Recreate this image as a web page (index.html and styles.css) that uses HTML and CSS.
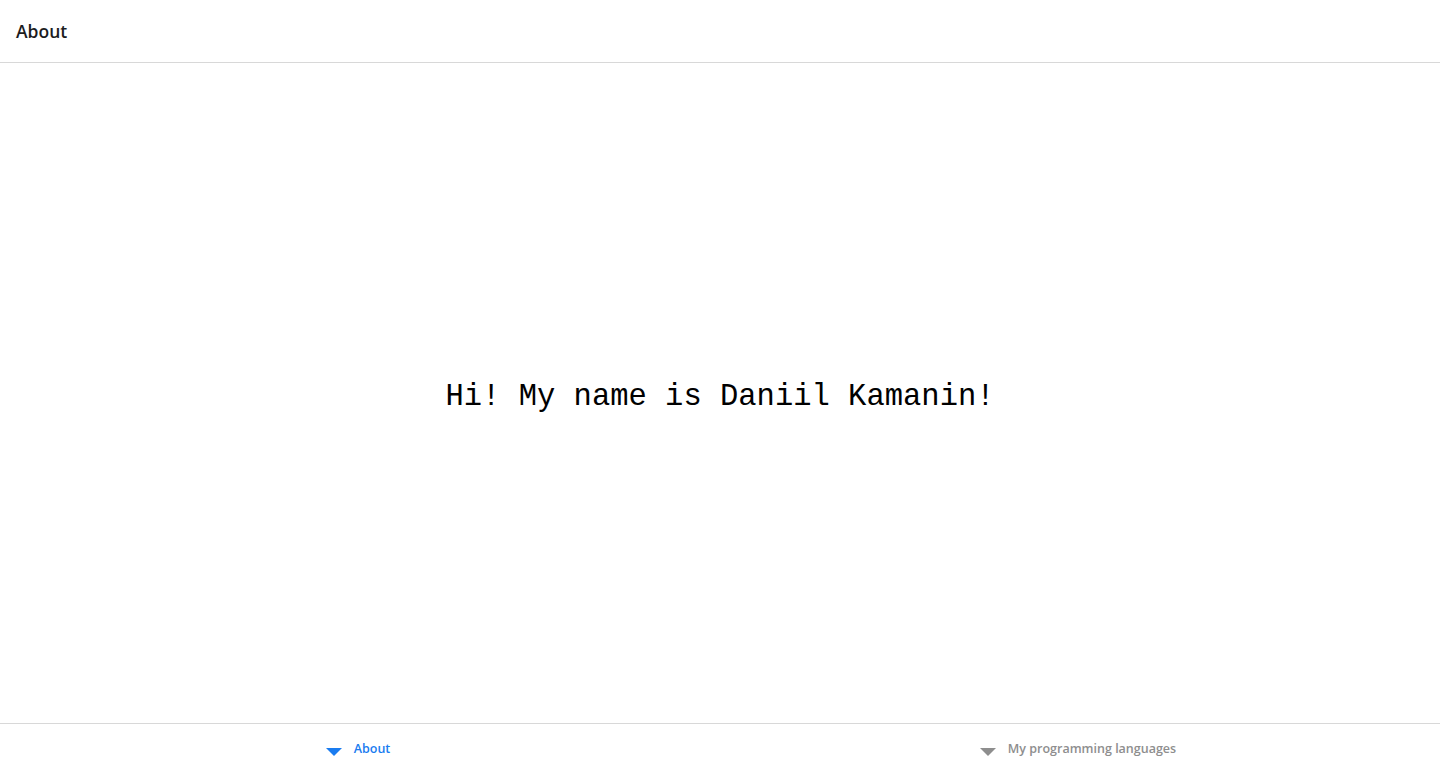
FILE: index.html
```html
<!DOCTYPE html>
<html lang="en">
<head>
<meta charset="utf-8">
<title>About</title>
<link rel="stylesheet" href="styles.css">
</head>
<body>
<div class="app">
  <header class="topbar"><h1 class="title">About</h1></header>
  <main class="content">
    <p class="greeting">Hi! My name is Daniil Kamanin!</p>
  </main>
  <nav class="tabbar">
    <a class="tab active" href="#">
      <svg class="tab-icon" width="16" height="10" viewBox="0 0 16 10"><path d="M0 1h16L8 9z" fill="currentColor"/></svg>
      <span class="tab-label">About</span>
    </a>
    <a class="tab" href="#">
      <svg class="tab-icon" width="16" height="10" viewBox="0 0 16 10"><path d="M0 1h16L8 9z" fill="currentColor"/></svg>
      <span class="tab-label">My programming languages</span>
    </a>
  </nav>
</div>
</body>
</html>
```
FILE: styles.css
```css
html, body {
  margin: 0;
  padding: 0;
  height: 100%;
  background: #fff;
  font-family: "Open Sans", "Noto Sans", "Liberation Sans", sans-serif;
}
.app {
  display: flex;
  flex-direction: column;
  height: 100vh;
}
.topbar {
  height: 62px;
  border-bottom: 1px solid #d8d8d8;
  display: flex;
  align-items: center;
  padding: 0 16px;
  flex: none;
}
.title {
  margin: 0;
  font-size: 17.5px;
  font-weight: 600;
  color: #1c1c1e;
}
.content {
  flex: 1;
  display: flex;
  align-items: center;
  justify-content: center;
  padding-top: 8px;
}
.greeting {
  margin: 0;
  font-family: "Liberation Mono", "DejaVu Sans Mono", monospace;
  font-size: 30.5px;
  color: #000;
}
.tabbar {
  height: 47px;
  border-top: 1px solid #d8d8d8;
  display: flex;
  flex: none;
}
.tab {
  flex: 1;
  display: flex;
  align-items: center;
  justify-content: center;
  gap: 12px;
  padding-right: 4px;
  padding-top: 2px;
  text-decoration: none;
  color: #8e8e8e;
}
.tab.active {
  color: #1a7cf0;
}
.tab-icon {
  margin-top: 7px;
}
.tab-label {
  font-size: 12.5px;
  font-weight: 600;
}
```
